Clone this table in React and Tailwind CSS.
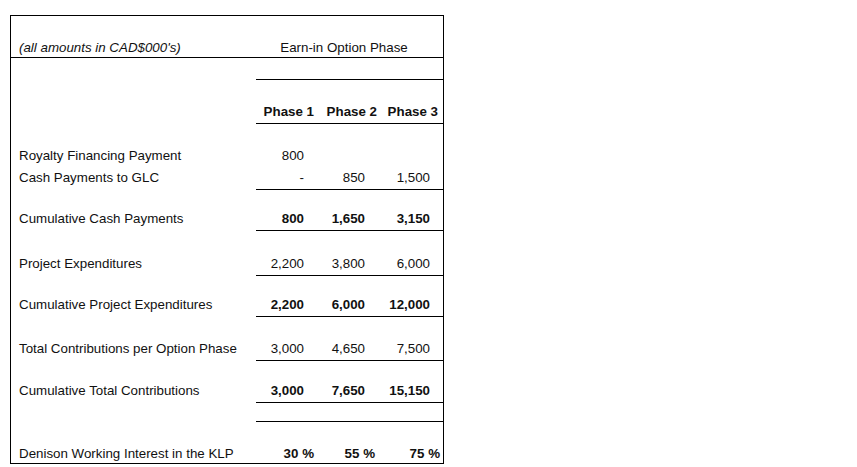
import React from "react";

const font = { fontFamily: '"Liberation Sans", Arial, sans-serif' };

function Row({ h, pt, label, vals = [], bold = false, line = false, prs }) {
  const defaultPrs = ["pr-[14px]", "pr-[14px]", "pr-[13px]"];
  const p = prs || defaultPrs;
  return (
    <div className={`grid grid-cols-[245px_62px_61px_64px] ${h}`}>
      <div className={`pl-[8px] ${pt} whitespace-nowrap`}>{label}</div>
      {[0, 1, 2].map((i) => (
        <div
          key={i}
          className={`text-right whitespace-nowrap ${pt} ${p[i]} ${line ? "border-b border-black" : ""} ${bold ? "font-bold" : ""}`}
        >
          {vals[i] ?? ""}
        </div>
      ))}
    </div>
  );
}

export default function App() {
  return (
    <div className="w-[857px] h-[467px] bg-white overflow-hidden relative" style={font}>
      <div className="ml-[10px] mt-[15px] w-[434px] h-[449px] border border-black text-[13.33px] leading-[22px] text-[#111]">
        {/* header */}
        <div className="grid grid-cols-[245px_187px] h-[42px] border-b border-black">
          <div className="pl-[8px] pt-[21px] italic whitespace-nowrap">(all amounts in CAD$000's)</div>
          <div className="pt-[21px] text-center pr-[11px] whitespace-nowrap">Earn-in Option Phase</div>
        </div>
        <Row h="h-[22px]" pt="pt-0" line />
        <Row
          h="h-[42px]"
          pt="pt-[21px]"
          vals={["Phase 1", "Phase 2", "Phase 3"]}
          bold
          line
          prs={["pr-[4px]", "pr-[2px]", "pr-[5px]"]}
        />
        <Row h="h-[44px]" pt="pt-[23px]" label="Royalty Financing Payment" vals={["800"]} />
        <Row h="h-[22px]" pt="pt-[1px]" label="Cash Payments to GLC" vals={["-", "850", "1,500"]} line />
        <Row h="h-[41px]" pt="pt-[20px]" label="Cumulative Cash Payments" vals={["800", "1,650", "3,150"]} bold line />
        <Row h="h-[44px]" pt="pt-[24px]" label="Project Expenditures" vals={["2,200", "3,800", "6,000"]} line />
        <Row h="h-[41px]" pt="pt-[21px]" label="Cumulative Project Expenditures" vals={["2,200", "6,000", "12,000"]} bold line />
        <Row h="h-[44px]" pt="pt-[24px]" label="Total Contributions per Option Phase" vals={["3,000", "4,650", "7,500"]} line />
        <Row h="h-[42px]" pt="pt-[22px]" label="Cumulative Total Contributions" vals={["3,000", "7,650", "15,150"]} bold line />
        <Row h="h-[22px]" pt="pt-0" line />
        <Row
          h="h-[41px]"
          pt="pt-[21px]"
          label="Denison Working Interest in the KLP"
          vals={["30 %", "55 %", "75 %"]}
          bold
          prs={["pr-[4px]", "pr-[4px]", "pr-[3px]"]}
        />
      </div>
    </div>
  );
}
